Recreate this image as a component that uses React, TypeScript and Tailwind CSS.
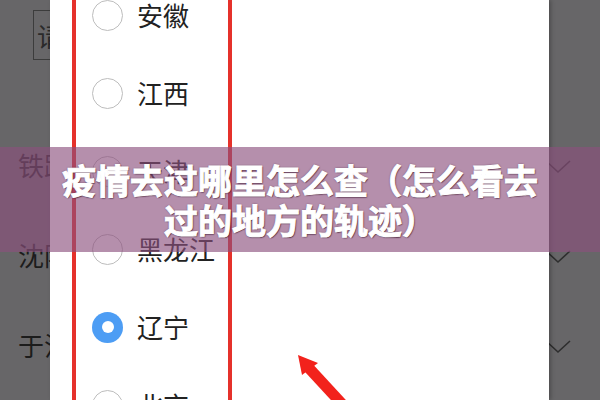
import React from "react";

const provinces = [
  { name: "安徽", checked: false },
  { name: "江西", checked: false },
  { name: "天津", checked: false },
  { name: "黑龙江", checked: false },
  { name: "辽宁", checked: true },
  { name: "北京", checked: false },
];

function Chevron() {
  return (
    <svg width="26" height="14" viewBox="0 0 26 14" fill="none">
      <path d="M1 1 L13 12 L25 1" stroke="#2e2e2e" strokeWidth="1.6" />
    </svg>
  );
}

function PageRow({ label }: { label: string }) {
  return (
    <div className="flex h-[90px] items-center justify-between pl-[18px] pr-[29px]">
      <span className="text-[26px] leading-none text-[#1c1c1c]">{label}</span>
      <div className="pt-[4px]">
        <Chevron />
      </div>
    </div>
  );
}

function Radio({ checked }: { checked: boolean }) {
  if (checked) {
    return (
      <div className="flex h-[31px] w-[31px] items-center justify-center rounded-full bg-[#4d9df4]">
        <div className="h-[12px] w-[12px] rounded-full bg-white" />
      </div>
    );
  }
  return <div className="h-[31px] w-[31px] rounded-full border-[1.5px] border-[#bdbdbd]" />;
}

export default function App() {
  return (
    <div
      className="relative h-[400px] w-[600px] overflow-hidden bg-[#676668]"
      style={{ fontFamily: '"Noto Sans CJK SC", "Noto Sans", sans-serif' }}
    >
      {/* page behind the dialog */}
      <div className="flex flex-col">
        <div className="flex h-[120px] items-start pl-[33px] pt-[10px]">
          <div className="flex h-[50px] w-[40px] items-center border border-[#3c3c3c] pl-[3px] text-[26px] text-[#2a2a2a]">
            请
          </div>
        </div>
        <PageRow label="铁路" />
        <PageRow label="沈阳" />
        <PageRow label="于洪" />
      </div>

      {/* province picker dialog */}
      <div className="absolute bottom-0 left-[50px] top-0 w-[499px] bg-white shadow-[2px_0_4px_rgba(0,0,0,0.25)]">
        <div className="mt-[-24px] flex flex-col">
          {provinces.map((p) => (
            <div key={p.name} className="flex h-[78px] items-center gap-[14px] pl-[42px]">
              <Radio checked={p.checked} />
              <span className="text-[26px] leading-none text-[#222]">{p.name}</span>
            </div>
          ))}
        </div>
      </div>

      {/* red highlight frame */}
      <div className="absolute bottom-[-10px] left-[72px] top-[-10px] w-[160px] border-[4px] border-[#e5312b]" />

      {/* red arrow */}
      <svg className="absolute left-0 top-0" width="600" height="400" viewBox="0 0 600 400">
        <line x1="343" y1="405" x2="307" y2="366" stroke="#f2221c" strokeWidth="11" />
        <polygon points="298,355 318,363 302,375" fill="#f2221c" />
      </svg>

      {/* caption banner */}
      <div className="absolute left-0 right-0 top-[147px] flex h-[105px] flex-col items-center justify-center bg-[rgba(140,80,125,0.64)]">
        <div
          className="text-center text-[34px] font-bold leading-[40px] text-white"
          style={{
            WebkitTextStroke: "1px #ffffff",
            textShadow: "0 0 2px rgba(60,25,50,0.9), 1px 1px 1px rgba(60,25,50,0.7)",
          }}
        >
          <div>疫情去过哪里怎么查（怎么看去</div>
          <div>过的地方的轨迹）</div>
        </div>
      </div>
    </div>
  );
}
